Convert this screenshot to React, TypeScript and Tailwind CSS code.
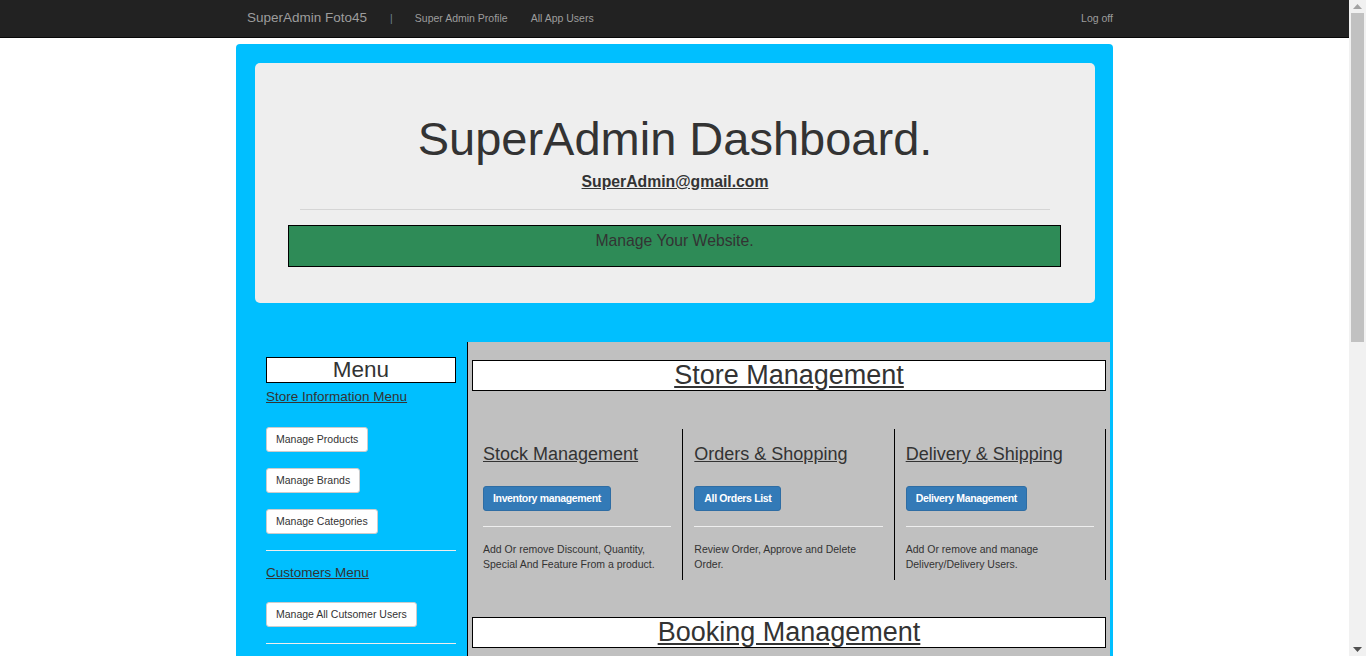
const font = 'font-[Liberation_Sans,Arial,sans-serif]'

function SideButton({ label }: { label: string }) {
  return (
    <button className="self-start h-[25px] px-[9px] bg-white border border-[#ccc] rounded-[3px] text-[10.5px] leading-[15px] text-[#333]">
      {label}
    </button>
  )
}

function SectionTitle({ title }: { title: string }) {
  return (
    <div className="mx-[4px] h-[31px] bg-white border border-black text-center">
      <a href="#" className="text-[27px] leading-[29px] text-[#333] underline">{title}</a>
    </div>
  )
}

type Col = { heading: string; button: string; text: string }

function Columns({ cols }: { cols: Col[] }) {
  return (
    <div className="mx-[4px] mt-[38px] grid grid-cols-3">
      {cols.map((c) => (
        <div key={c.heading} className="border-r border-black px-[11px] pb-[8px]">
          <h3 className="mt-[15px] text-[18px] leading-[20px] text-[#333]">
            <a href="#" className="underline">{c.heading}</a>
          </h3>
          <button className="mt-[22px] h-[25px] px-[9px] bg-[#337ab7] border border-[#2e6da4] rounded-[3px] text-[10.5px] leading-[15px] text-white font-bold tracking-[-0.35px]">
            {c.button}
          </button>
          <div className="mt-[15px] h-px bg-[#eee]" />
          <p className="mt-[15px] text-[10.5px] leading-[15px] text-[#333]">{c.text}</p>
        </div>
      ))}
    </div>
  )
}

// the browser's scrollbar in the reference, drawn over the right edge
function Scrollbar() {
  return (
    <div className="fixed top-0 right-0 w-[17px] h-screen bg-[#f1f1f1]">
      <svg className="absolute top-[4px] left-[4px]" width="9" height="5" viewBox="0 0 9 5">
        <path d="M0 5 L4.5 0 L9 5 Z" fill="#a3a3a3" />
      </svg>
      <div className="absolute top-[13px] left-[2px] w-[13px] h-[329px] bg-[#c1c1c1]" />
      <svg className="absolute bottom-[4px] left-[4px]" width="9" height="5" viewBox="0 0 9 5">
        <path d="M0 0 L4.5 5 L9 0 Z" fill="#505050" />
      </svg>
    </div>
  )
}

export default function App() {
  return (
    <div className={`${font} min-h-[1240px] bg-white text-[#333] pr-[17px]`}>
      <nav className="h-[38px] bg-[#222] border-b border-[#080808]">
        <div className="w-[877px] mx-auto h-full flex items-center text-[#9d9d9d]">
          <a href="#" className="pl-[11px] text-[13.5px]">SuperAdmin Foto45</a>
          <span className="ml-[23px] text-[10.5px] text-[#6d8295]">|</span>
          <a href="#" className="ml-[22px] text-[10.5px]">Super Admin Profile</a>
          <a href="#" className="ml-[23px] text-[10.5px]">All App Users</a>
          <a href="#" className="ml-auto text-[10.5px]">Log off</a>
        </div>
      </nav>

      <div className="w-[877px] mx-auto mt-[6px] bg-[#00bfff] rounded-t-[4px] pt-[19px] pb-[40px]">
        <div className="ml-[19px] mr-[18px] h-[240px] bg-[#eee] rounded-[5px] pt-[50px]">
          <h1 className="text-center text-[47px] leading-[52px] text-[#333]">SuperAdmin Dashboard.</h1>
          <p className="mt-[6px] text-center text-[15.75px] leading-[22px] font-bold">
            <a href="#" className="underline text-[#333]">SuperAdmin@gmail.com</a>
          </p>
          <div className="mt-[16px] mx-[45px] h-px bg-[#d5d5d5]" />
          <div className="mt-[15px] ml-[33px] mr-[34px] h-[42px] bg-[#2e8b57] border border-black pt-[4px] text-center text-[15.75px] leading-[22px] text-[#333]">
            Manage Your Website.
          </div>
        </div>

        <div className="mt-[39px] flex">
          <div className="ml-[30px] w-[190px] pt-[15px] shrink-0">
            <div className="h-[26px] bg-white border border-black text-center text-[22.5px] leading-[24px] text-[#333]">Menu</div>
            <a href="#" className="block mt-[4px] text-[13.5px] leading-[19px] underline text-[#333]">Store Information Menu</a>
            <div className="mt-[21px] flex flex-col gap-[16px]">
              <SideButton label="Manage Products" />
              <SideButton label="Manage Brands" />
              <SideButton label="Manage Categories" />
            </div>
            <div className="mt-[16px] h-px bg-[#eee]" />
            <a href="#" className="block mt-[12px] text-[13.5px] leading-[19px] underline text-[#333]">Customers Menu</a>
            <div className="mt-[20px] flex flex-col">
              <SideButton label="Manage All Cutsomer Users" />
            </div>
            <div className="mt-[16px] h-px bg-[#eee]" />
            <a href="#" className="block mt-[12px] text-[13.5px] leading-[19px] underline text-[#333]">Booking Menu</a>
            <div className="mt-[20px] flex flex-col gap-[16px]">
              <SideButton label="Manage Bookings" />
              <SideButton label="Manage Photographers" />
            </div>
            <div className="mt-[16px] h-px bg-[#eee]" />
          </div>

          <div className="ml-[11px] mr-[3px] flex-1 bg-[#c0c0c0] border-l border-black pt-[18px] pb-[30px]">
            <SectionTitle title="Store Management" />
            <Columns
              cols={[
                { heading: 'Stock Management', button: 'Inventory management', text: 'Add Or remove Discount, Quantity, Special And Feature From a product.' },
                { heading: 'Orders & Shopping', button: 'All Orders List', text: 'Review Order, Approve and Delete Order.' },
                { heading: 'Delivery & Shipping', button: 'Delivery Management', text: 'Add Or remove and manage Delivery/Delivery Users.' },
              ]}
            />
            <div className="mt-[37px]">
              <SectionTitle title="Booking Management" />
            </div>
            <Columns
              cols={[
                { heading: 'Bookings', button: 'All Bookings', text: 'Review Booking, Approve and Delete Booking.' },
                { heading: 'Photographers', button: 'Photographers List', text: 'Add Or remove and manage Photographer Users.' },
                { heading: 'Packages', button: 'Manage Packages', text: 'Add Or remove Price, Duration And Feature From a package.' },
              ]}
            />
          </div>
        </div>
      </div>
      <Scrollbar />
    </div>
  )
}
